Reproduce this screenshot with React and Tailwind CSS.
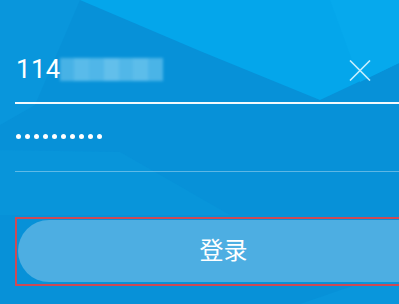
import React from 'react';

const font = { fontFamily: 'Roboto, "Noto Sans CJK SC", sans-serif' };

function Background() {
  return (
    <svg className="absolute inset-0" width="399" height="304" viewBox="0 0 399 304">
      <rect width="399" height="304" fill="#0791d8" />
      <polygon points="0,0 80,0 35,105 0,125" fill="#0996dc" />
      <polygon points="80,0 399,0 399,63 320,100 200,51" fill="#04a6eb" />
      <polygon points="330,0 399,0 399,63 360,82" fill="#06a9ed" />
      <polygon points="0,150 120,152 230,215 0,215" fill="#0895da" />
      <polygon points="300,304 399,270 399,304" fill="#0996dc" />
    </svg>
  );
}

function Blurred() {
  const shades = ['#4fb6e8', '#62c0ec', '#58bbea', '#6cc4ee', '#5abcea', '#66c2ed', '#52b8e9'];
  return (
    <div className="flex h-[23px] w-[103px] blur-[1.5px] opacity-90">
      {shades.map((c, i) => (
        <div key={i} className="flex-1" style={{ backgroundColor: c }} />
      ))}
    </div>
  );
}

export default function App() {
  return (
    <div className="relative w-[399px] h-[304px] overflow-hidden" style={font}>
      <Background />
      <div className="relative flex flex-col pl-[15px] pt-[40px]">
        {/* account row */}
        <div className="flex items-center h-[62px] pb-[5px] pl-px">
          <span className="text-[26px] leading-[26px] text-white tracking-[0.3px]">114</span>
          <div className="-ml-px mt-[1px]">
            <Blurred />
          </div>
          <button className="ml-auto mr-[28px] mt-[3px]">
            <svg width="22" height="21" viewBox="0 0 22 21">
              <path d="M1 0.5 L21 20.5 M21 0.5 L1 20.5" stroke="#c6effd" strokeWidth="1.6" />
            </svg>
          </button>
        </div>
        <div className="h-[2px] bg-white/95" />

        {/* password row */}
        <div className="flex items-center gap-[4px] h-[67px] pb-[3px] pl-px">
          {Array.from({ length: 10 }).map((_, i) => (
            <span key={i} className="w-[5px] h-[5px] rounded-full bg-white" />
          ))}
        </div>
        <div className="h-px bg-white/35" />

        {/* login button */}
        <div className="mt-[45px] w-[417px] h-[69px] border-2 border-[#cd4a55] p-px">
          <button className="w-[411px] h-[62px] rounded-full bg-[#4daee2] text-white text-[24px] leading-none flex items-center justify-center pb-[1px]">
            登录
          </button>
        </div>
      </div>
    </div>
  );
}
